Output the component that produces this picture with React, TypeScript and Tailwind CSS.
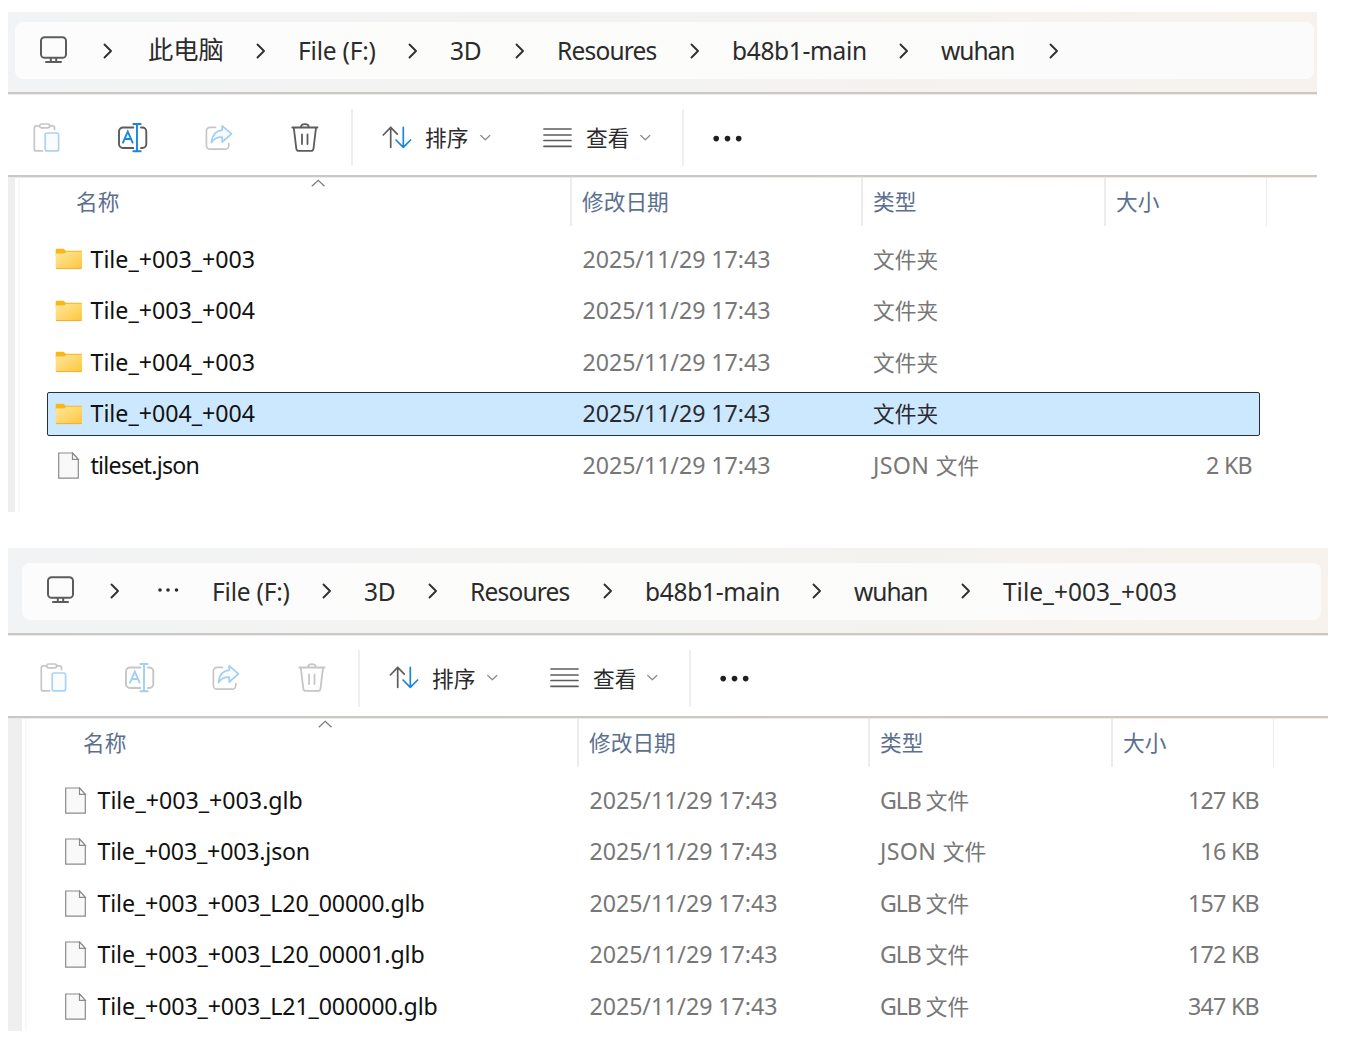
import React from 'react'
import clsx from 'clsx'

type Entry = {
    name: string
    kind: 'folder' | 'file'
    type: string
    size?: string
    selected?: boolean
    tracking?: string
}

type Crumb = { label: string; className: string }

const DATE = '2025/11/29 17:43'

const rootCrumbs: Crumb[] = [
    { label: '此电脑', className: 'w-[75px] pb-[2px] text-[25.3px] tracking-normal' },
    { label: 'File (F:)', className: 'w-[77px] pt-[2px]' },
    { label: '3D', className: 'w-[32px] pt-[2px]' },
    { label: 'Resoures', className: 'w-[100px] pt-[2px] tracking-[-0.8px]' },
    { label: 'b48b1-main', className: 'w-[134px] pt-[2px] tracking-[-0.35px]' },
    { label: 'wuhan', className: 'w-[75px] pt-[2px] tracking-[-1px]' },
]

const tileCrumbs: Crumb[] = [
    { label: 'File (F:)', className: 'w-[77px] pt-[2px]' },
    { label: '3D', className: 'w-[31px] pt-[2px]' },
    { label: 'Resoures', className: 'w-[100px] pt-[2px] tracking-[-0.8px]' },
    { label: 'b48b1-main', className: 'w-[134px] pt-[2px] tracking-[-0.3px]' },
    { label: 'wuhan', className: 'w-[74px] pt-[2px] tracking-[-1px]' },
    { label: 'Tile_+003_+003', className: 'w-[176px] pt-[2px] tracking-normal' },
]

const rootEntries: Entry[] = [
    { name: 'Tile_+003_+003', kind: 'folder', type: '文件夹' },
    { name: 'Tile_+003_+004', kind: 'folder', type: '文件夹' },
    { name: 'Tile_+004_+003', kind: 'folder', type: '文件夹' },
    { name: 'Tile_+004_+004', kind: 'folder', type: '文件夹', selected: true },
    { name: 'tileset.json', kind: 'file', type: 'JSON 文件', size: '2 KB', tracking: 'tracking-[-0.75px]' },
]

const tileEntries: Entry[] = [
    { name: 'Tile_+003_+003.glb', kind: 'file', type: 'GLB 文件', size: '127 KB' },
    { name: 'Tile_+003_+003.json', kind: 'file', type: 'JSON 文件', size: '16 KB', tracking: 'tracking-[-0.2px]' },
    { name: 'Tile_+003_+003_L20_00000.glb', kind: 'file', type: 'GLB 文件', size: '157 KB', tracking: 'tracking-[-0.14px]' },
    { name: 'Tile_+003_+003_L20_00001.glb', kind: 'file', type: 'GLB 文件', size: '172 KB', tracking: 'tracking-[-0.14px]' },
    { name: 'Tile_+003_+003_L21_000000.glb', kind: 'file', type: 'GLB 文件', size: '347 KB', tracking: 'tracking-[-0.14px]' },
]

const MonitorIcon = () => (
    <svg viewBox="0 0 28 28" className="w-7 h-7 -mt-[2px] shrink-0" fill="none" stroke="#5c5c5c" strokeWidth="2">
        <rect x="1" y="1.200" width="25" height="20.600" rx="3.600" />
        <path d="M10.800 22v4M16.200 22v4M6 26h15" strokeLinecap="round" />
    </svg>
)

const CrumbArrow = () => (
    <svg viewBox="0 0 10 16" className="w-[10px] h-4 shrink-0" fill="none" stroke="#303030" strokeWidth="1.900">
        <path d="M1.500 1.500L8 8l-6.500 6.500" strokeLinecap="round" strokeLinejoin="round" />
    </svg>
)

const PasteIcon = () => (
    <svg viewBox="0 0 32 32" className="w-8 h-8" fill="none" strokeWidth="1.700">
        <path d="M11.500 28.900H5.300a2 2 0 0 1-2-2V5.800a2 2 0 0 1 2-2h3M18.500 3.800h3a2 2 0 0 1 2 2V7.500" stroke="#c6c6c6" strokeLinecap="round" />
        <rect x="8.700" y="2" width="10" height="3.800" rx="1.900" stroke="#c6c6c6" />
        <rect x="14.200" y="11" width="13.400" height="17.900" rx="2" stroke="#abd3f3" fill="#fafcfe" />
    </svg>
)

const RenameIcon = ({ disabled }: { disabled?: boolean }) => {
    const gray = disabled ? '#c6c6c6' : '#5c5c5c'
    const blue = disabled ? '#a3cff3' : '#1a86dc'
    return (
        <svg viewBox="0 0 32 32" className="w-8 h-8" fill="none" strokeWidth="1.900" strokeLinecap="round">
            <path d="M16.300 26H6a4 4 0 0 1-4-4V9.500a4 4 0 0 1 4-4h10.300M24 5.500h1.300a4 4 0 0 1 4 4V22a4 4 0 0 1-4 4H24" stroke={gray} />
            <path d="M6 20.600L10.800 9.700l4.800 10.900M7.600 17h6.400M20 2v27.200M16.300 2h7.400M16.300 29.200h7.400" stroke={blue} />
        </svg>
    )
}

const ShareIcon = () => (
    <svg viewBox="0 0 32 32" className="w-8 h-8" fill="none" strokeWidth="1.700" strokeLinecap="round" strokeLinejoin="round">
        <path d="M12.500 5.300H7.200a3.800 3.800 0 0 0-3.800 3.800v14.300a3.800 3.800 0 0 0 3.800 3.800h14.800a3.800 3.800 0 0 0 3.800-3.800V21.500" stroke="#c6c6c6" />
        <path d="M19.200 3.800l9.300 8-9.300 8.200v-4.800c-4.800-.2-8 1.200-10.700 5.300.5-7.300 4.500-11.600 10.700-12.300z" stroke="#a3cff3" fill="#f8fbfe" />
    </svg>
)

const TrashIcon = ({ disabled }: { disabled?: boolean }) => (
    <svg viewBox="0 0 32 32" className="w-8 h-8" fill="none" stroke={disabled ? '#c6c6c6' : '#5c5c5c'} strokeWidth="1.800" strokeLinecap="round">
        <path d="M3.300 5.500h25.200M12 5.300c0-4.300 7.800-4.300 7.800 0M4.800 5.800l2.500 20.800a2.600 2.600 0 0 0 2.600 2.300h12a2.600 2.600 0 0 0 2.600-2.300L27 5.800M13 12.500v9.500M18.500 12.500v9.500" />
    </svg>
)

const SortIcon = () => (
    <svg viewBox="0 0 32 32" className="w-8 h-8" fill="none" strokeWidth="1.700" strokeLinecap="round" strokeLinejoin="round">
        <path d="M9.700 25.300V5.300M2.300 13L9.700 5.300l6.600 6.800" stroke="#5c5c5c" />
        <path d="M22.300 5.300v20M15 18l7.300 7.300 7.300-7.300" stroke="#1a86dc" />
    </svg>
)

const ViewIcon = () => (
    <svg viewBox="0 0 32 32" className="w-8 h-8" fill="none" stroke="#5c5c5c" strokeWidth="1.700" strokeLinecap="round">
        <path d="M2 7h27M2 13h27M2 18.500h27M2 24.300h27" />
    </svg>
)

const DropArrow = () => (
    <svg viewBox="0 0 12 8" className="w-3 h-2" fill="none" stroke="#8c8c8c" strokeWidth="1.300">
        <path d="M.800 1.500L5.300 5.800l4.500-4.300" strokeLinecap="round" strokeLinejoin="round" />
    </svg>
)

const MoreIcon = () => (
    <svg viewBox="0 0 32 32" className="w-8 h-8" fill="#1f1f1f">
        <circle cx="4.200" cy="16.600" r="2.800" />
        <circle cx="15.500" cy="16.600" r="2.800" />
        <circle cx="26.700" cy="16.600" r="2.800" />
    </svg>
)

const FolderIcon = ({ id }: { id: string }) => (
    <svg viewBox="0 0 28 22" className="w-7 h-[22px]">
        <defs>
            <linearGradient id={id} x1="0" y1="0" x2="1" y2="1">
                <stop offset="0" stopColor="#ffe8a0" />
                <stop offset="1" stopColor="#fdc63a" />
            </linearGradient>
        </defs>
        <path d="M.700 2a1.200 1.200 0 0 1 1.200-1.200h6.600L10.800 2.800H26a1 1 0 0 1 1 1V8H.700z" fill="#f9b817" />
        <path d="M.700 5.600h8.600l2.200-1.800H27V19.800a1 1 0 0 1-1 1H1.700a1 1 0 0 1-1-1z" fill={`url(#${id})`} />
        <path d="M1 20.600h25.700" stroke="#efae35" strokeWidth="1" />
    </svg>
)

const FileIcon = () => (
    <svg viewBox="0 0 22 28" className="w-[22px] h-7 mt-px" fill="#f9f9f9" stroke="#8b8b8b" strokeWidth="1.200">
        <path d="M.700 1h13.800l5.800 6.400v18.800H.700z" />
        <path d="M14.500 1v6.400h5.800z" fill="#fff" />
    </svg>
)

// Chinese runs are set a little smaller than the Latin text around them
const MixedText = ({ text }: { text: string }) => (
    <>
        {text.split(/([\u4e00-\u9fff]+)/).filter(Boolean).map((part, i) => (
            <span
                key={i}
                className={clsx(
                    /[\u4e00-\u9fff]/.test(part) && 'text-[21.7px]',
                    part.startsWith('GLB') && 'tracking-[-1.1px]',
                    part.startsWith('JSON') && 'tracking-[0.4px]',
                )}
            >
                {part}
            </span>
        ))}
    </>
)

const HeaderCell = ({ label, className }: { label: string; className: string }) => (
    <div className={clsx('h-12 pt-[12.4px] pl-[10px] border-l-2 border-[#ececec] text-[21.7px] leading-6 text-[#5b6f8e]', className)}>{label}</div>
)

const Rule = () => (
    <div className="h-[3px] shrink-0 border-b border-[#eeeae7] bg-gradient-to-r from-[#c8c8c7] via-[#cbc9c4] to-[#d0c6be]" />
)

type ExplorerProps = {
    id: string
    className: string
    inset: string
    barPadding: string
    sidebar: string
    collapsed?: boolean
    crumbs: Crumb[]
    entries: Entry[]
}

const Explorer: React.FC<ExplorerProps> = ({ id, className, inset, barPadding, sidebar, collapsed, crumbs, entries }) => {
    return (
        <section className={clsx('flex flex-col overflow-hidden bg-white', className)}>
            <div className={clsx('shrink-0 bg-gradient-to-r from-[#f2f3f4] via-[#f3f3f1] to-[#f7f2ee]', barPadding)}>
                <div className="flex items-center w-[1299px] h-[57px] pl-[25px] rounded-lg bg-gradient-to-r from-[#fcfcfd] via-[#fcfcfa] to-[#fbfbfc] text-[24.5px] tracking-[-0.2px] text-[#2b2b2b]">
                    <MonitorIcon />
                    <div className="flex justify-center w-[80px] pr-px shrink-0">
                        <CrumbArrow />
                    </div>
                    {collapsed && (
                        <svg viewBox="0 0 22 6" className="w-[22px] h-[6px] mr-[33px] ml-[2px] -mt-[3px]" fill="#2b2b2b">
                            <circle cx="3" cy="3" r="1.800" />
                            <circle cx="11" cy="3" r="1.800" />
                            <circle cx="19.500" cy="3" r="1.800" />
                        </svg>
                    )}
                    {crumbs.map((crumb, i) => (
                        <React.Fragment key={crumb.label}>
                            <span className={clsx('shrink-0 whitespace-nowrap', crumb.className)}>{crumb.label}</span>
                            {!(collapsed && i === crumbs.length - 1) && (
                                <div className="flex justify-center w-[75px] shrink-0">
                                    <CrumbArrow />
                                </div>
                            )}
                        </React.Fragment>
                    ))}
                </div>
            </div>
            <Rule />

            <div className={clsx('flex items-center h-[80px] pt-[5px] shrink-0', inset)}>
                <div className="flex items-center gap-[54px] pl-4">
                    <PasteIcon />
                    <RenameIcon disabled={collapsed} />
                    <ShareIcon />
                    <TrashIcon disabled={collapsed} />
                </div>
                <div className="w-[2px] h-[57px] ml-[30px] mr-7 bg-[#efefef]" />
                <SortIcon />
                <span className="ml-3 w-[55px] pt-px text-[21.7px] text-[#2b2b2b]">排序</span>
                <DropArrow />
                <div className="ml-[50px]">
                    <ViewIcon />
                </div>
                <span className="ml-3 w-[54px] pt-px text-[21.7px] text-[#2b2b2b]">查看</span>
                <DropArrow />
                <div className="w-[2px] h-[57px] ml-[30px] mr-7 bg-[#efefef]" />
                <MoreIcon />
            </div>
            <Rule />

            <div className="flex grow min-h-0">
                <div className={clsx('shrink-0 bg-[#efefef]', sidebar)} />
                <div className="w-[2px] ml-[3px] shrink-0 bg-[#f8f8f8]" />
                <div className="pl-[27px]">
                    <div className="flex relative h-[55.7px]">
                        <div className="w-[523px] pt-[12.4px] pl-[29px] text-[21.7px] leading-6 text-[#5b6f8e]">名称</div>
                        <svg viewBox="0 0 14 8" className="absolute left-[264px] top-[1px] w-[14px] h-2" fill="none" stroke="#7d7d7d" strokeWidth="1.300">
                            <path d="M.800 7.200L7.200 1.300l6.300 5.900" />
                        </svg>
                        <HeaderCell label="修改日期" className="w-[291px]" />
                        <HeaderCell label="类型" className="w-[243px]" />
                        <HeaderCell label="大小" className="w-[163px] border-r" />
                    </div>
                    {entries.map((entry) => (
                        <div key={entry.name} className="flex items-center h-[51.45px]">
                            <div
                                className={clsx(
                                    'flex items-center w-[1213px] h-[44px] border text-[23.2px] whitespace-nowrap',
                                    entry.selected ? 'rounded-xs border-[#25313c] bg-[#cce8ff] text-[#2a2a2e]' : 'border-transparent text-[#777]',
                                )}
                            >
                                <div className="flex justify-center w-[42px]">
                                    {entry.kind === 'folder' ? <FolderIcon id={`${id}-${entry.name}`} /> : <FileIcon />}
                                </div>
                                <span className={clsx('pl-[0.5px] w-[492.5px] text-[#111]', entry.tracking)}>{entry.name}</span>
                                <span className="w-[290.5px] tracking-[-0.05px]">{DATE}</span>
                                <span className="w-[200px]"><MixedText text={entry.type} /></span>
                                <span className="w-[179px] text-right tracking-[-0.7px]">{entry.size}</span>
                            </div>
                        </div>
                    ))}
                </div>
            </div>
        </section>
    )
}

const App: React.FC = () => {
    return (
        <main lang="zh-CN" className="h-[1038px] pt-3 pl-2 overflow-hidden bg-white font-['Noto_Sans','Noto_Sans_CJK_SC',sans-serif]">
            <Explorer
                id="root"
                className="w-[1309px] h-[500px]"
                inset="pl-[7px]"
                barPadding="pt-[10px] pb-[13px] pl-[7px]"
                sidebar="w-[7px]"
                crumbs={rootCrumbs}
                entries={rootEntries}
            />
            <Explorer
                id="tile"
                className="mt-9 w-[1320px] h-[483px]"
                inset="pl-[14px]"
                barPadding="pt-[14.6px] pb-[13.4px] pl-[14px]"
                sidebar="w-[14px]"
                collapsed
                crumbs={tileCrumbs}
                entries={tileEntries}
            />
        </main>
    )
}

export default App
